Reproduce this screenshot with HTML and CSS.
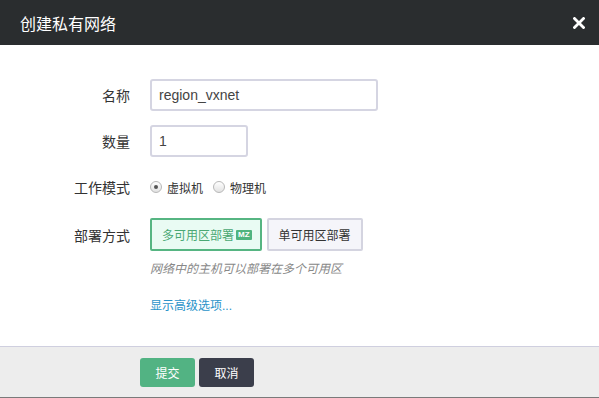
FILE: index.html
```html
<!DOCTYPE html>
<html lang="zh">
<head>
    <meta charset="UTF-8">
    <title>创建私有网络</title>
    <link rel="stylesheet" href="styles.css">
</head>
<body>
    <div class="modal">
        <div class="modal-header">
            <span class="modal-title">创建私有网络</span>
            <svg class="close-btn" width="12" height="12" viewBox="0 0 12 12">
                <path d="M1.5 1.5 L10.5 10.5 M10.5 1.5 L1.5 10.5" stroke="#ffffff" stroke-width="2.8" stroke-linecap="square"/>
            </svg>
        </div>

        <div class="modal-body">
            <div class="form-row">
                <label class="form-label">名称</label>
                <input type="text" class="text-input name-input" value="region_vxnet">
            </div>
            <div class="form-row">
                <label class="form-label">数量</label>
                <input type="text" class="text-input count-input" value="1">
            </div>
            <div class="form-row radio-row">
                <label class="form-label">工作模式</label>
                <div class="radio-group">
                    <span class="radio checked"></span><span class="radio-text">虚拟机</span>
                    <span class="radio"></span><span class="radio-text">物理机</span>
                </div>
            </div>
            <div class="form-row deploy-row">
                <label class="form-label">部署方式</label>
                <div class="deploy-group">
                    <button class="deploy-btn active">多可用区部署<span class="mz-badge">MZ</span></button>
                    <button class="deploy-btn">单可用区部署</button>
                </div>
            </div>
            <div class="form-row hint-row">
                <span></span>
                <p class="hint">网络中的主机可以部署在多个可用区</p>
            </div>
            <div class="form-row link-row">
                <span></span>
                <a class="advanced-link" href="#">显示高级选项...</a>
            </div>
        </div>

        <div class="modal-footer">
            <button class="btn btn-submit">提交</button>
            <button class="btn btn-cancel">取消</button>
        </div>
    </div>
</body>
</html>
```

FILE: styles.css
```css
body {
    margin: 0;
    font-family: "Liberation Sans", "Noto Sans CJK SC", sans-serif;
    background: #ffffff;
    color: #333333;
}

.modal {
    width: 599px;
    height: 398px;
    display: flex;
    flex-direction: column;
}

.modal-header {
    height: 45px;
    background-color: #2a2d2f;
    display: flex;
    align-items: center;
    justify-content: space-between;
    padding: 0 14px 0 20px;
}

.modal-title {
    color: #ffffff;
    font-size: 16px;
}

.close-btn {
    display: block;
}

.modal-body {
    flex: 1;
    padding-top: 34px;
}

.form-row {
    display: grid;
    grid-template-columns: 130px 1fr;
    column-gap: 20px;
    align-items: center;
    margin-bottom: 14px;
}

.form-label {
    text-align: right;
    font-size: 14px;
    color: #333333;
}

.text-input {
    height: 32px;
    box-sizing: border-box;
    border: 2px solid #d5d5e2;
    border-radius: 3px;
    padding: 0 7px;
    font-family: "Liberation Sans", "Noto Sans CJK SC", sans-serif;
    font-size: 14px;
    color: #444444;
    outline: none;
}

.name-input {
    width: 228px;
}

.count-input {
    width: 98px;
}

.radio-row {
    margin-top: 20px;
    margin-bottom: 21px;
}

.radio-group {
    display: flex;
    align-items: center;
    font-size: 12px;
    color: #333333;
}

.radio {
    width: 10px;
    height: 10px;
    border: 1px solid #b8b8b8;
    border-radius: 50%;
    background: linear-gradient(#ffffff, #e2e2e2);
    margin-right: 5px;
    position: relative;
}

.radio.checked::after {
    content: "";
    position: absolute;
    left: 3px;
    top: 3px;
    width: 4px;
    height: 4px;
    border-radius: 50%;
    background: #555555;
}

.radio-text {
    margin-right: 10px;
}

.deploy-row {
    margin-bottom: 8px;
}

.deploy-group {
    display: flex;
    gap: 5px;
}

.deploy-btn {
    height: 33px;
    box-sizing: border-box;
    border: 2px solid #d4d4e0;
    border-radius: 2px;
    background: #f5f5fa;
    font-family: "Liberation Sans", "Noto Sans CJK SC", sans-serif;
    font-size: 12px;
    color: #333333;
    padding: 0 10px;
    display: flex;
    align-items: center;
    white-space: nowrap;
}

.deploy-btn.active {
    border-color: #56b582;
    background: #e9fbf3;
    color: #4aa874;
    padding-right: 8px;
}

.mz-badge {
    background: #4fb47f;
    color: #ffffff;
    font-size: 8px;
    font-weight: bold;
    padding: 0 2px;
    margin-left: 2px;
    line-height: 10px;
    border-radius: 1px;
}

.hint {
    margin: 0;
    font-size: 12px;
    font-style: italic;
    color: #888888;
}

.link-row {
    margin-top: 20px;
}

.advanced-link {
    font-size: 12px;
    color: #2a93c9;
    text-decoration: none;
}

.modal-footer {
    height: 50px;
    border-top: 1px solid #cfcfdf;
    border-bottom: 1px solid #7a7a7a;
    background: #ededed;
    display: flex;
    align-items: center;
    gap: 4px;
    padding-left: 140px;
}

.btn {
    width: 55px;
    height: 29px;
    border: none;
    border-radius: 3px;
    color: #ffffff;
    font-family: "Liberation Sans", "Noto Sans CJK SC", sans-serif;
    font-size: 12px;
    cursor: pointer;
}

.btn-submit {
    background-color: #52b383;
}

.btn-cancel {
    background-color: #3b3e4b;
}
```
